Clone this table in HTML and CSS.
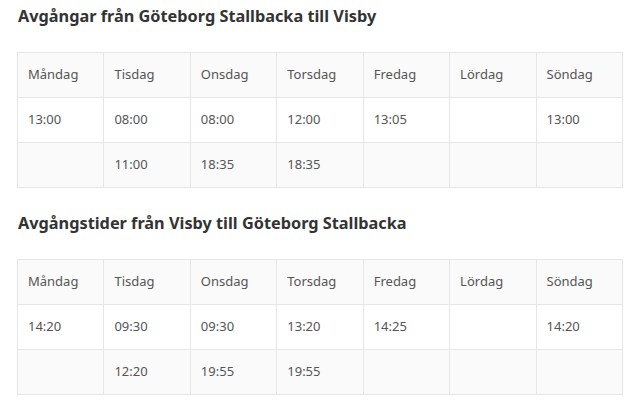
FILE: index.html
```html
<!DOCTYPE html>
<html lang="sv">
<head>
<meta charset="utf-8">
<link rel="stylesheet" href="styles.css">
</head>
<body>
<section class="block first">
  <h2 class="title">Avgångar från Göteborg Stallbacka till Visby</h2>
  <table class="times">
    <tr><td>Måndag</td><td>Tisdag</td><td>Onsdag</td><td>Torsdag</td><td>Fredag</td><td>Lördag</td><td>Söndag</td></tr>
    <tr><td>13:00</td><td>08:00</td><td>08:00</td><td>12:00</td><td>13:05</td><td></td><td>13:00</td></tr>
    <tr><td></td><td>11:00</td><td>18:35</td><td>18:35</td><td></td><td></td><td></td></tr>
  </table>
</section>
<section class="block">
  <h2 class="title">Avgångstider från Visby till Göteborg Stallbacka</h2>
  <table class="times">
    <tr><td>Måndag</td><td>Tisdag</td><td>Onsdag</td><td>Torsdag</td><td>Fredag</td><td>Lördag</td><td>Söndag</td></tr>
    <tr><td>14:20</td><td>09:30</td><td>09:30</td><td>13:20</td><td>14:25</td><td></td><td>14:20</td></tr>
    <tr><td></td><td>12:20</td><td>19:55</td><td>19:55</td><td></td><td></td><td></td></tr>
  </table>
</section>
</body>
</html>
```
FILE: styles.css
```css
html, body {
  margin: 0;
  padding: 0;
  background: #fff;
}
body {
  padding: 5px 19px 0 17px;
  font-family: "Noto Sans", "Open Sans", sans-serif;
  color: #555;
}
.block {
  margin-bottom: 24px;
}
.title {
  margin: 0 0 25px 1px;
  font-size: 16.3px;
  line-height: 22px;
  font-weight: 700;
  color: #333;
}
.times {
  width: 100%;
  border-collapse: collapse;
  table-layout: fixed;
  font-size: 13px;
}
.times td {
  border: 1px solid #e6e6e6;
  height: 45px;
  padding: 0 10px 2px;
  vertical-align: middle;
  box-sizing: border-box;
}
.times tr:nth-child(odd) td {
  background: #fafafa;
}
```
